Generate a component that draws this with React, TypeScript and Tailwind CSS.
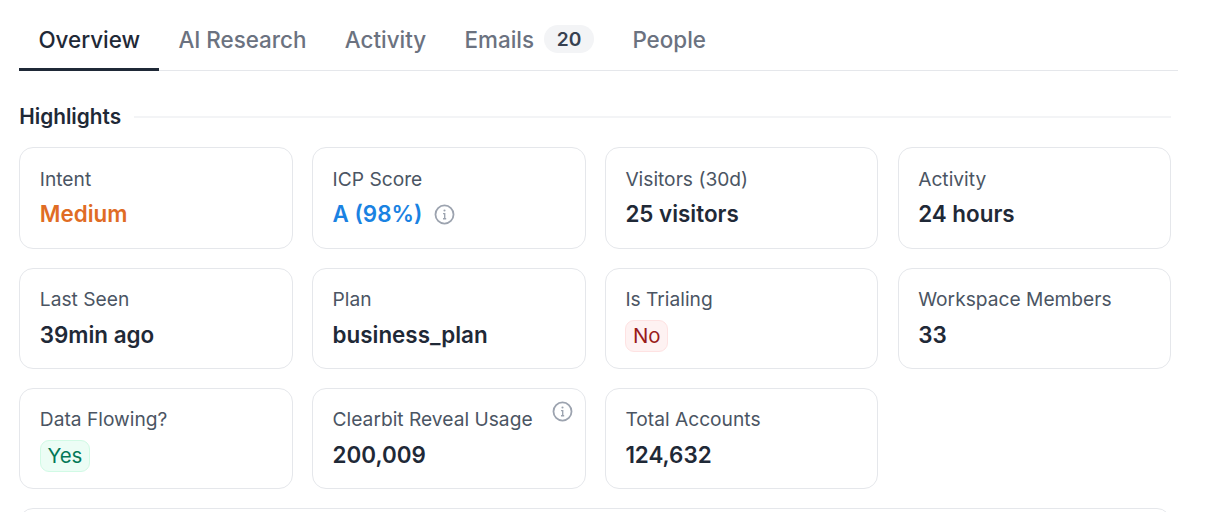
import React from "react";

function Info({ className }: { className: string }) {
  return (
    <svg viewBox="0 0 20 20" fill="none" className={className}>
      <circle cx="10" cy="10" r="8.6" stroke="#9ca3af" strokeWidth="1.7" />
      <path d="M8.6 9.2H10.2V14M8.6 14H11.6" stroke="#9ca3af" strokeWidth="1.3" />
      <circle cx="10" cy="6.2" r="1" fill="#9ca3af" />
    </svg>
  );
}

function Card({ label, children, extra }: { label: string; children: React.ReactNode; extra?: React.ReactNode }) {
  return (
    <div className="relative h-[101.4px] rounded-[14px] border border-[#e5e7eb] bg-white pl-[19.6px] pr-4 pt-[16.5px]">
      <div className="text-[19.2px] leading-[28px] text-[#4b5563]">{label}</div>
      <div className="mt-[6.6px] text-[22.4px] leading-[30px] font-semibold text-[#1f2937]">{children}</div>
      {extra}
    </div>
  );
}

function Badge({ cls, children }: { cls: string; children: React.ReactNode }) {
  return (
    <span className={"inline-flex h-[32px] items-center rounded-[9px] border px-[6.6px] text-[20.4px] font-normal " + cls}>{children}</span>
  );
}

export default function App() {
  const tabs = ["AI Research", "Activity"];
  return (
    <div className="h-[512px] w-[1208px] overflow-hidden bg-white font-['Inter',sans-serif]">
      <div className="ml-[19.2px] mr-[30px] flex h-[71px] items-stretch border-b border-[#e5e7eb] text-[22.4px]">
        <div className="-mb-px flex items-center border-b-[3px] border-[#1f2937] px-[19.2px] pt-[11px] font-medium text-[#1f2937]">Overview</div>
        {tabs.map((t) => (
          <div key={t} className="flex items-center px-[19.2px] pt-[10px] font-medium text-[#6b7280]">{t}</div>
        ))}
        <div className="flex items-center gap-[10px] px-[19.2px] pt-[10px] font-medium text-[#6b7280]">
          Emails
          <span className="-mt-[2px] flex h-[28px] w-[50px] items-center justify-center rounded-full bg-[#f3f4f6] text-[19.2px] font-semibold text-[#374151]">20</span>
        </div>
        <div className="flex items-center px-[19.2px] pt-[10px] font-medium text-[#6b7280]">People</div>
      </div>

      <div className="ml-[19.2px] w-[1152px]">
        <div className="mt-[30px] flex h-[32px] items-center gap-[13px]">
          <span className="text-[20.8px] font-semibold text-[#1f2937]">Highlights</span>
          <div className="h-[2px] flex-1 bg-[#f3f4f6]" />
        </div>
        <div className="mt-[14.2px] grid grid-cols-4 gap-x-[19.2px] gap-y-[19px]">
          <Card label="Intent"><span className="text-[#e06c24]">Medium</span></Card>
          <Card label="ICP Score">
            <span className="inline-flex items-center gap-[12px] text-[#1a82e2]">A (98%)<Info className="h-[21px] w-[21px]" /></span>
          </Card>
          <Card label="Visitors (30d)">25 visitors</Card>
          <Card label="Activity">24 hours</Card>
          <Card label="Last Seen">39min ago</Card>
          <Card label="Plan">business_plan</Card>
          <Card label="Is Trialing"><Badge cls="border-[#fee2e2] bg-[#fef2f2] text-[#991b1b]">No</Badge></Card>
          <Card label="Workspace Members">33</Card>
          <Card label="Data Flowing?"><Badge cls="border-[#d1fae5] bg-[#ecfdf5] text-[#047857]">Yes</Badge></Card>
          <Card label="Clearbit Reveal Usage" extra={<Info className="absolute right-[12px] top-[12px] h-[21px] w-[21px]" />}>200,009</Card>
          <Card label="Total Accounts">124,632</Card>
        </div>
        <div className="mt-[19px] h-[60px] rounded-[14px] border border-[#e5e7eb] bg-white" />
      </div>
    </div>
  );
}
